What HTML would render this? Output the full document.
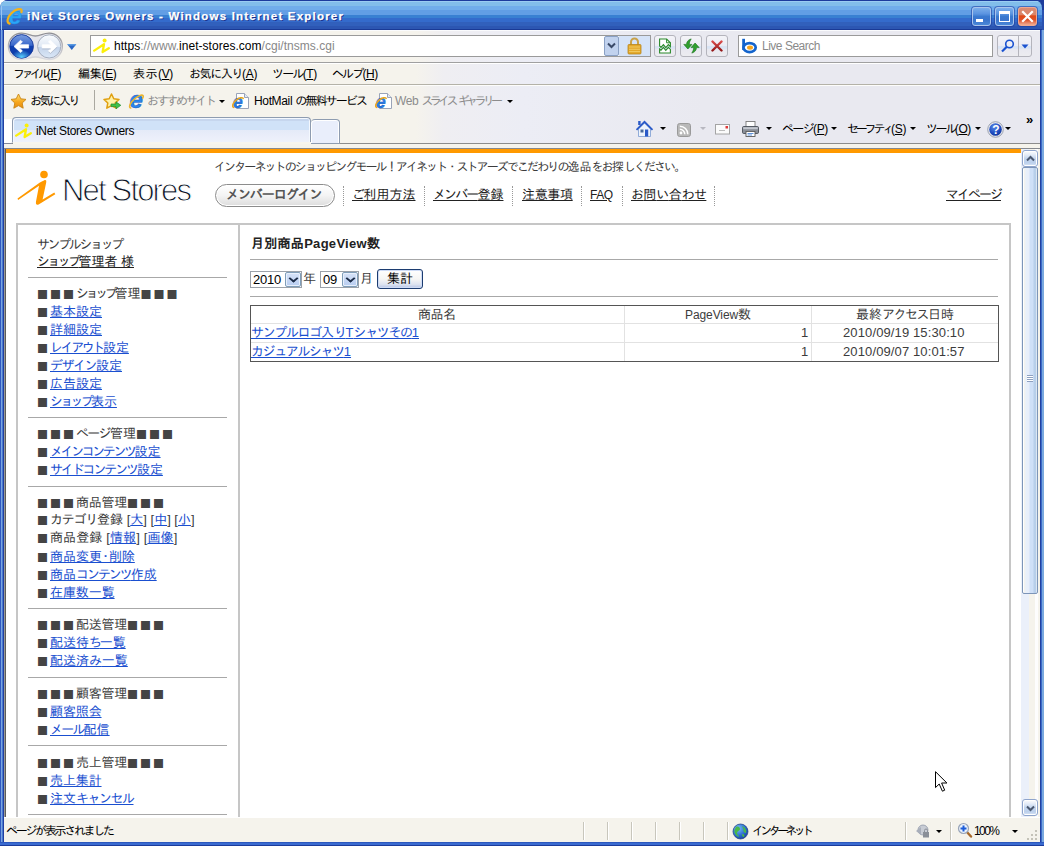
<!DOCTYPE html>
<html lang="ja"><head><meta charset="utf-8"><title>iNet Stores Owners</title>
<style>
*{box-sizing:border-box;margin:0;padding:0}
html,body{width:1044px;height:846px;overflow:hidden;background:#fff}
body{position:relative;font-family:"Liberation Sans","IPAGothic",sans-serif;font-size:12px;color:#000}
.a{position:absolute}
.ui{font-family:"Liberation Sans","IPAGothic",sans-serif;font-size:12px;line-height:14px;white-space:nowrap;color:#000;letter-spacing:-.35px}
.pg{font-family:"Liberation Sans","IPAGothic",sans-serif;font-size:13px;line-height:18px;white-space:nowrap;color:#3c3c3c}
u{text-decoration:underline}
/* window frame */
#frame{left:0;top:0;width:1044px;height:846px;background:#2a52b0;border-radius:8px 0 0 0}
#title{left:0;top:0;width:1042px;height:30px;border-radius:8px 8px 0 0;
background:linear-gradient(#1c3c9c 0,#1c3c9c 1px,#9acdf2 1px,#9acdf2 2px,#82beea 2px,#82beea 6px,#70adea 6px,#70adea 10px,#629ee5 10px,#629ee5 15px,#3980d2 15px,#3980d2 18px,#346bcc 18px,#346bcc 22px,#3160bc 22px,#3160bc 26px,#2c56b2 26px,#2c56b2 29px,#1a3a96 29px)}
#chrome{left:4px;top:30px;width:1036px;height:118px;background:linear-gradient(90deg,#f5f3ec 0,#f5f3ec 412px,#efeef2 440px,#ecedf5 520px,#e9e9f0 700px,#e9e9f0 100%)}
#page{left:6px;top:149px;width:1015px;height:668px;background:#fff;overflow:hidden}
#status{left:4px;top:817px;width:1036px;height:25px;background:#f5f3ec;border-top:1px solid #fff}

#title .tt{left:27px;top:9px;font:bold 11.5px/15px "Liberation Sans","IPAGothic",sans-serif;color:#fff;letter-spacing:1.2px;white-space:nowrap;text-shadow:1px 1px 0 #14308c;-webkit-text-stroke:.25px #fff}
.tb{top:7px;width:19px;height:19px;border-radius:3px;border:1px solid #a9c4ec;box-shadow:0 0 0 1px rgba(28,60,156,.55)}
.tbb{background:linear-gradient(#7aaeea 0,#5a93e0 35%,#3a7ad0 50%,#3a74cc 70%,#4a88d8 100%)}
.tbr{background:linear-gradient(#d88a72 0,#dc8468 40%,#e04a18 46%,#de5026 70%,#e88060 85%,#f2ac90 100%);border-color:#f0a890}
#corner-l,#corner-r{top:0;width:8px;height:8px;background:#fff}

.ln{height:1px;left:4px;width:1036px}
.box{background:#fff;border:1px solid #9a9a9a}
.btn{border:1px solid #b4b4bc;border-radius:3px;background:linear-gradient(#f4f4f8 0,#ececf4 48%,#d9e4f4 50%,#d9e4f4 62%,#e8e8f0 64%,#ececf0 100%)}

.g{color:#8c8c8c}
.dd{width:0;height:0;border:3px solid transparent;border-top:3px solid #000;border-bottom:0}

#tab{box-shadow:inset 1px 1px 0 #f4f8fe,inset -1px 0 0 #f4f8fe;left:12px;top:117px;width:299px;height:25px;border:1px solid #8e9cb0;border-bottom:0;border-radius:4px 4px 0 0;
background:linear-gradient(#c6d6ee 0,#c6d6ee 3px,#d0e2f8 3px,#d0e2f8 12px,#e4eaf8 12px,#e9edf9 17px,#eef1fb 24px)}
#ntab{left:311px;top:119px;width:29px;height:25px;border:1px solid #8e9cb0;border-left:0;border-radius:4px 4px 0 0;background:#e9eefb;box-shadow:inset 1px 1px 0 #fff,inset -1px 0 0 #fff}

#page a,.lk{color:#1a4fd0;text-decoration:underline}
.dk{color:#222;text-decoration:underline}
.hr{height:1px;background:#a8a8a8}
.sq{letter-spacing:0;font:12px/18px "IPAGothic",sans-serif;display:inline-block;width:13px;text-align:center;color:#444;vertical-align:top;position:relative;left:-1px}
.vd{top:37px;width:0;height:20px;border-left:1px dotted #999}
.sel{height:17px;border:1px solid #9ca2aa;background:#fff;font:13px/15px "Liberation Sans","IPAGothic",sans-serif;color:#000;padding-left:2px;letter-spacing:-.2px}
.sel i{position:absolute;right:0;top:0;width:16px;height:15px;background:linear-gradient(#d6e2f8,#b8cdf0);border:1px solid #7f9db9;border-radius:2px;box-shadow:inset 0 0 0 1px #e8f0fc}
.sel i:after{content:"";position:absolute;left:4px;top:2px;width:5px;height:5px;border-right:2px solid #1c2c48;border-bottom:2px solid #1c2c48;transform:scale(1,.8) rotate(45deg);transform-origin:50% 50%}
table{border-collapse:collapse}

#sb{left:1021px;top:149px;width:17px;height:668px;background:linear-gradient(90deg,#ebf0fa 0,#ebf0fa 8px,#f5f3ec 8px,#f5f3ec 14px,#fdfdfd 14px)}
.sbb{left:1px;width:16px;height:17px;border:1px solid #8ea4cc;border-radius:3px;background:linear-gradient(#fdfdfe 0,#e4ecf8 25%,#c3d5ee 50%,#bcd0ec 80%,#dce6f6 100%);box-shadow:inset 0 0 0 1px #fff}
#thumb{left:1px;top:18px;width:16px;height:427px;border:1px solid #7d95b8;border-radius:2px;background:linear-gradient(90deg,#fff 0,#fff 1px,#f6f3ea 1px,#e8f0fb 3px,#e8eefa 6px,#cfe0f8 7px,#cfe0f8 10px,#b8cfea 11px,#b8cfea 13px,#fff 14px)}
.sp{top:4px;width:1px;height:18px;background:#c8c6bc;box-shadow:1px 0 0 #fff}
/*FIT*/
#m1 .k{letter-spacing:-3.57px}
#m2 .k{letter-spacing:-0.23px}
#m3 .k{letter-spacing:0.52px}
#m4 .k{letter-spacing:-1.39px}
#m5 .k{letter-spacing:-1.77px}
#m6 .k{letter-spacing:-1.88px}
#f1 .k{letter-spacing:-2.38px}
#f2 .k{letter-spacing:-2.33px}
#f3 .k{letter-spacing:-1.87px}
#f4 .k{letter-spacing:-3.67px}
#url{letter-spacing:0.03px}
#tabt{letter-spacing:-0.33px}
#c1 .k{letter-spacing:-1.66px}
#c2 .k{letter-spacing:-3.19px}
#c3 .k{letter-spacing:-2.43px}
#logo{letter-spacing:-1.83px}
#tag .k{letter-spacing:-1.90px}
#login .k{letter-spacing:-1.07px}
#n1 .k{letter-spacing:-1.50px}
#n2 .k{letter-spacing:-1.88px}
#n3{letter-spacing:-0.33px}
#n4{letter-spacing:-0.51px}
#n5 .k{letter-spacing:-0.67px}
#n6 .k{letter-spacing:-2.00px}
#st1 .k{letter-spacing:-2.30px}
#st2 .k{letter-spacing:-3.67px}
#st3{letter-spacing:-1.57px}
#s0 .k{letter-spacing:-2.39px}
#s1 .k{letter-spacing:-2.66px}
#s2 .k{letter-spacing:-3.38px}
#s3{letter-spacing:0.00px}
#s4{letter-spacing:0.00px}
#s5 .k{letter-spacing:-2.42px}
#s6 .k{letter-spacing:-1.50px}
#s7{letter-spacing:0.00px}
#s8 .k{letter-spacing:-2.77px}
#s9 .k{letter-spacing:-1.70px}
#s10 .k{letter-spacing:-2.43px}
#s11 .k{letter-spacing:-2.14px}
#s12{letter-spacing:-0.28px}
#s13 .k{letter-spacing:-1.24px}
#s14{letter-spacing:0.12px}
#s15{letter-spacing:-0.03px}
#s16 .k{letter-spacing:-2.06px}
#s17{letter-spacing:-0.08px}
#s18{letter-spacing:-0.28px}
#s19 .k{letter-spacing:-2.30px}
#s20 .k{letter-spacing:-0.20px}
#s21{letter-spacing:-0.28px}
#s22{letter-spacing:-0.12px}
#s23 .k{letter-spacing:-1.80px}
#s24{letter-spacing:-0.28px}
#s25{letter-spacing:-0.12px}
#s26 .k{letter-spacing:-1.50px}
#th1{letter-spacing:-0.50px}
#th2{letter-spacing:-0.10px}
#th3 .k{letter-spacing:-1.50px}
#r1c{letter-spacing:0.12px}
#r2c{letter-spacing:0.12px}
#r1a .k{letter-spacing:-1.35px}
#r2a .k{letter-spacing:-1.40px}
#mt{letter-spacing:0.29px}
#ls{letter-spacing:-0.49px}
/*ENDFIT*/
</style></head><body>
<div class="a" id="frame"></div>
<div class="a" style="left:1034px;top:0;width:10px;height:10px;background:#1c3c9c"></div>
<div class="a" id="title">
<svg class="a" style="left:5px;top:6px" width="20" height="20" viewBox="0 0 20 20">
<text x="3.4" y="17.6" style="font:italic bold 24px 'Liberation Sans',sans-serif" fill="#2aa6f6" stroke="#1a86e8" stroke-width=".3">e</text>
<path d="M4.6 17.6 C1.4 16.6 2 11.4 6.4 7.2 C10.4 3.4 15 2 16.4 3.8 C17 4.6 16.8 5.4 16.4 6.2" fill="none" stroke="#f2b21c" stroke-width="2.2" stroke-linecap="round"/>
</svg>
<div class="a" style="left:1px;top:6px;width:1px;height:24px;background:#9cc4ee"></div>
<div class="a tt">iNet Stores Owners - Windows Internet Explorer</div>
<div class="a tb tbb" style="left:972px"><div class="a" style="left:3px;top:11px;width:7px;height:3px;background:#fff"></div></div>
<div class="a tb tbb" style="left:995px"><div class="a" style="left:3px;top:3px;width:11px;height:11px;border:1px solid #fff;border-top-width:3px"></div></div>
<div class="a tb tbr" style="left:1018px"><svg class="a" style="left:2px;top:2px" width="13" height="13" viewBox="0 0 13 13"><path d="M2 2 L11 11 M11 2 L2 11" stroke="#fff" stroke-width="2.2" stroke-linecap="square"/></svg></div>
</div>
<div class="a" id="chrome"></div>
<div class="a ln" style="top:30px;background:#fafbfd"></div>
<div class="a ln" style="top:62px;background:#a0a0a0"></div>
<div class="a ln" style="top:63px;background:#fff"></div>
<svg class="a" style="left:6px;top:32px" width="74" height="30" viewBox="0 0 74 30">
<defs>
<linearGradient id="gb" x1="0" y1="0" x2="0" y2="1"><stop offset="0" stop-color="#7a9ee0"/><stop offset=".45" stop-color="#3a68cc"/><stop offset=".5" stop-color="#0f40b0"/><stop offset="1" stop-color="#0a3aa8"/></linearGradient>
<radialGradient id="gbg" cx=".5" cy=".5" r=".5"><stop offset="0" stop-color="#5cd0ff"/><stop offset="1" stop-color="#5cd0ff" stop-opacity="0"/></radialGradient>
<linearGradient id="gf" x1="0" y1="0" x2="0" y2="1"><stop offset="0" stop-color="#fafcfe"/><stop offset=".5" stop-color="#dfe8f4"/><stop offset=".55" stop-color="#c4d4ea"/><stop offset="1" stop-color="#dbe8f8"/></linearGradient>
<linearGradient id="gp" x1="0" y1="0" x2="0" y2="1"><stop offset="0" stop-color="#8e8e94"/><stop offset="1" stop-color="#dcdce0"/></linearGradient>
<clipPath id="cb"><circle cx="15.6" cy="14.4" r="11.6"/></clipPath>
</defs>
<path d="M15.6 1.2 C22 1.2 24 4 29.4 4 C34.8 4 36.8 1.2 43.2 1.2 A13.2 13.2 0 0 1 43.2 27.6 C36.8 27.6 34.8 25 29.4 25 C24 25 22 27.6 15.6 27.6 A13.2 13.2 0 0 1 15.6 1.2Z" fill="#e6e6ec" stroke="url(#gp)" stroke-width="1.3"/>
<circle cx="15.6" cy="14.4" r="11.8" fill="url(#gb)" stroke="#16389a" stroke-width=".9"/>
<ellipse cx="15.6" cy="25" rx="10" ry="7" fill="url(#gbg)" clip-path="url(#cb)"/>
<path d="M8 14.4 L14.6 8.2 L16.4 10 L13.4 12.7 L22.6 12.7 L22.6 16.1 L13.4 16.1 L16.4 18.8 L14.6 20.6Z" fill="#fff" stroke="#fff" stroke-width=".7" stroke-linejoin="round"/>
<circle cx="43.2" cy="14.4" r="11.6" fill="url(#gf)" stroke="#a4aebe" stroke-width="1"/>
<path d="M50.8 14.4 L44.2 8.2 L42.4 10 L45.4 12.7 L36.2 12.7 L36.2 16.1 L45.4 16.1 L42.4 18.8 L44.2 20.6Z" fill="#fff" stroke="#fff" stroke-width=".7" stroke-linejoin="round"/>
<path d="M51.2 15.2 L44.4 21.6 L42.6 19.8 M36.2 17 H44.6" fill="none" stroke="#b4bccb" stroke-width=".8"/>
<path d="M61.2 12.2 L70.3 12.2 L65.75 18Z" fill="#2a66c4"/><path d="M61.2 12.2 L70.3 12.2 L69.2 13.6 L62.3 13.6Z" fill="#5aa0e8"/>
</svg>
<div class="a box" style="left:90px;top:35px;width:561px;height:22px"></div>
<svg class="a" style="left:93px;top:37px" width="18" height="18" viewBox="0 0 18 18"><circle cx="11.6" cy="3.4" r="2" fill="#fbef0a"/><path d="M1.2 13.6 L11 7.2 L9.6 15 L15.8 11.2" fill="none" stroke="#fbef0a" stroke-width="2.3" stroke-linejoin="round" stroke-linecap="round"/></svg>
<div class="a ui t" id="url" style="left:114px;top:39px"><span>https</span><span style="color:#888">://www.</span><span>inet-stores.com</span><span style="color:#888">/cgi/tnsms.cgi</span></div>
<div class="a" style="left:604px;top:36px;width:15px;height:20px;background:#c1d2ee;border:1px solid #8aa0c4;border-radius:2px"></div>
<svg class="a" style="left:607px;top:42px" width="9" height="8" viewBox="0 0 9 8"><path d="M1 1.5 L4.5 5 L8 1.5" fill="none" stroke="#3a4a68" stroke-width="2"/></svg>
<div class="a" style="left:619px;top:36px;width:31px;height:20px;background:#d5e3f8"></div>
<svg class="a" style="left:627px;top:37px" width="15" height="18" viewBox="0 0 15 18"><path d="M4 8 V5 A3.5 3.5 0 0 1 11 5 V8" fill="none" stroke="#c9a24a" stroke-width="2"/><rect x="1" y="7.5" width="13" height="9.5" rx="1" fill="#e3a82a" stroke="#b8851c" stroke-width=".8"/><path d="M2 10 H13 M2 12.3 H13 M2 14.6 H13" stroke="#f3cf6a" stroke-width=".9"/></svg>
<div class="a btn" style="left:654px;top:35px;width:22px;height:22px"></div>
<svg class="a" style="left:658px;top:38px" width="14" height="16" viewBox="0 0 14 16"><g fill="#fff" stroke="#2a8a2a" stroke-width="1.1" stroke-linejoin="miter"><path d="M1.6 1 H8.6 L12.4 4.8 V8.6 L10.4 6.6 L7.8 9.6 L5.4 6.6 L3 9.4 L1.6 8Z"/><path d="M1.6 11 L3 12.2 L5.4 9.4 L7.8 12.4 L10.4 9.4 L12.4 11.4 V15 H1.6Z"/></g><path d="M8.6 1 V4.8 H12.4" fill="none" stroke="#2a8a2a" stroke-width="1"/></svg>
<div class="a btn" style="left:680px;top:35px;width:22px;height:22px"></div>
<svg class="a" style="left:682px;top:38px" width="19" height="16" viewBox="0 0 19 16"><g fill="#2fa02f" stroke="#1a701a" stroke-width=".6" stroke-linejoin="round"><path d="M9.2 .9 C6.4 1.6 4.6 3.6 4.5 6.4 L1.8 6.4 L5.9 11 L10 6.4 L7.3 6.4 C7.3 4.4 8 3 9.2 .9Z"/><path d="M9.8 15.1 C12.6 14.4 14.4 12.4 14.5 9.6 L17.2 9.6 L13.1 5 L9 9.6 L11.7 9.6 C11.7 11.6 11 13 9.8 15.1Z"/></g></svg>
<div class="a btn" style="left:706px;top:35px;width:22px;height:22px"></div>
<svg class="a" style="left:711px;top:40px" width="12" height="12" viewBox="0 0 12 12"><defs><linearGradient id="gx" x1="0" y1="0" x2="0" y2="1"><stop offset="0" stop-color="#d84a4a"/><stop offset="1" stop-color="#941818"/></linearGradient></defs><path d="M1.5 1.5 L10.5 10.5 M10.5 1.5 L1.5 10.5" stroke="url(#gx)" stroke-width="2.4" stroke-linecap="round"/></svg>
<div class="a box" style="left:738px;top:35px;width:255px;height:22px"></div>
<svg class="a" style="left:741px;top:37px" width="18" height="18" viewBox="0 0 18 18"><path d="M2.6 1.8 V13" stroke="#1464cc" stroke-width="2.8"/><ellipse cx="8.6" cy="10.6" rx="6.1" ry="4.5" fill="#fff" stroke="#1464cc" stroke-width="2.7"/><ellipse cx="9" cy="10.6" rx="3" ry="2.2" fill="#f7a51c"/></svg>
<div class="a ui t" id="ls" style="left:762px;top:39px;color:#8a8a8a">Live Search</div>
<div class="a btn" style="left:997px;top:35px;width:35px;height:22px"></div>
<div class="a" style="left:1018px;top:36px;width:1px;height:20px;background:#b4b4bc"></div>
<svg class="a" style="left:1000px;top:38px" width="16" height="16" viewBox="0 0 16 16"><circle cx="9.5" cy="6" r="3.8" fill="none" stroke="#1a52d0" stroke-width="1.6"/><path d="M6.8 8.8 L2 13.5" stroke="#1a52d0" stroke-width="2.2"/></svg>
<svg class="a" style="left:1021px;top:44px" width="8" height="5" viewBox="0 0 8 5"><path d="M.5 .5 H7.5 L4 4.5Z" fill="#1a52d0"/></svg>

<div class="a ln" style="top:84px;background:#b4b2a8"></div>
<div class="a ln" style="top:85px;background:#fdfdfb"></div>
<div class="a ui t" id="m1" style="left:13px;top:67px"><span class="k">ファイル</span>(<u>F</u>)</div>
<div class="a ui t" id="m2" style="left:78px;top:67px"><span class="k">編集</span>(<u>E</u>)</div>
<div class="a ui t" id="m3" style="left:133px;top:67px"><span class="k">表示</span>(<u>V</u>)</div>
<div class="a ui t" id="m4" style="left:189px;top:67px"><span class="k">お気に入り</span>(<u>A</u>)</div>
<div class="a ui t" id="m5" style="left:272px;top:67px"><span class="k">ツール</span>(<u>T</u>)</div>
<div class="a ui t" id="m6" style="left:332px;top:67px"><span class="k">ヘルプ</span>(<u>H</u>)</div>
<svg class="a" style="left:10px;top:93px" width="17" height="16" viewBox="0 0 17 16"><defs><linearGradient id="gs" x1="0" y1="0" x2="0" y2="1"><stop offset="0" stop-color="#ffe27a"/><stop offset=".55" stop-color="#f7a81c"/><stop offset="1" stop-color="#e88a10"/></linearGradient></defs><path id="star" d="M8.5 1 L10.8 5.8 L16 6.4 L12.2 10 L13.2 15.2 L8.5 12.6 L3.8 15.2 L4.8 10 L1 6.4 L6.2 5.8Z" fill="url(#gs)" stroke="#c98412" stroke-width=".9" stroke-linejoin="round"/></svg>
<div class="a ui t" id="f1" style="left:30px;top:94px"><span class="k">お気に入り</span></div>
<div class="a" style="left:94px;top:90px;width:1px;height:20px;background:#aaa8a0"></div>
<svg class="a" style="left:103px;top:93px" width="19" height="17" viewBox="0 0 19 17"><path d="M8.5 1 L10.8 5.8 L16 6.4 L12.2 10 L13.2 15.2 L8.5 12.6 L3.8 15.2 L4.8 10 L1 6.4 L6.2 5.8Z" fill="#fff2a8" stroke="#e0a010" stroke-width="1.5" stroke-linejoin="round"/><path d="M8 11 H13 V8.8 L17.8 12.3 L13 15.8 V13.6 H8Z" fill="#3fc24a" stroke="#1f8a2c" stroke-width=".7"/></svg>
<svg class="a" style="left:128px;top:92px" width="18" height="18" viewBox="0 0 18 18"><text x="1.5" y="15.6" style="font:italic bold 24px 'Liberation Sans',sans-serif" fill="#2a86ea" stroke="#1858c0" stroke-width=".5">e</text><path d="M2.8 16 C1 16 1.2 13 4 9.5 C7 5.6 12.6 2.4 14.6 3.3 C15.5 3.8 15.3 5 14.7 6.2" fill="none" stroke="#eab430" stroke-width="1.6" stroke-linecap="round"/></svg>
<div class="a ui t g" id="f2" style="left:147px;top:94px"><span class="k">おすすめサイト</span></div>
<div class="a dd" style="left:219px;top:100px"></div>
<svg class="a" style="left:232px;top:92px" width="18" height="18" viewBox="0 0 18 18"><path d="M4.5 1.5 H12.5 L16.5 5.5 V16.5 H4.5Z" fill="#fff" stroke="#9aa4b8" stroke-width="1"/><path d="M12.5 1.5 V5.5 H16.5" fill="#e4e9f2" stroke="#9aa4b8" stroke-width="1"/><text x=".8" y="15.6" style="font:italic bold 18px 'Liberation Sans',sans-serif" fill="#2a7ee6" stroke="#1858c0" stroke-width=".35">e</text><path d="M1.6 15.4 C-.4 14.4 1 10.4 4.4 7.8 C7.2 5.6 10.4 5 11.2 6.4" fill="none" stroke="#eba81c" stroke-width="1.5" stroke-linecap="round"/></svg>
<div class="a ui t" id="f3" style="left:254px;top:94px">HotMail <span class="k">の無料サービス</span></div>
<svg class="a" style="left:375px;top:92px" width="18" height="18" viewBox="0 0 18 18"><path d="M4.5 1.5 H12.5 L16.5 5.5 V16.5 H4.5Z" fill="#fff" stroke="#9aa4b8" stroke-width="1"/><path d="M12.5 1.5 V5.5 H16.5" fill="#e4e9f2" stroke="#9aa4b8" stroke-width="1"/><text x=".8" y="15.6" style="font:italic bold 18px 'Liberation Sans',sans-serif" fill="#2a7ee6" stroke="#1858c0" stroke-width=".35">e</text><path d="M1.6 15.4 C-.4 14.4 1 10.4 4.4 7.8 C7.2 5.6 10.4 5 11.2 6.4" fill="none" stroke="#eba81c" stroke-width="1.5" stroke-linecap="round"/></svg>
<div class="a ui t g" id="f4" style="left:395px;top:94px">Web <span class="k">スライス</span> <span class="k">ギャラリー</span></div>
<div class="a dd" style="left:507px;top:100px"></div>

<div class="a" style="left:4px;top:143px;width:1036px;height:1px;background:#8c8c8c"></div>
<div class="a" style="left:4px;top:144px;width:1036px;height:4px;background:#f5f3ec"></div>
<div class="a" style="left:4px;top:119px;width:9px;height:25px;border-bottom:1px solid #80889a;border-radius:0 0 3px 0;background:#fff"></div>
<div class="a" id="ntab"></div>
<div class="a" id="tab"></div>
<div class="a" style="left:13px;top:142px;width:298px;height:2px;background:#f7f5ee"></div>
<svg class="a" style="left:15px;top:122px" width="18" height="18" viewBox="0 0 18 18"><circle cx="11.6" cy="3.4" r="2" fill="#fbef0a"/><path d="M1.2 13.6 L11 7.2 L9.6 15 L15.8 11.2" fill="none" stroke="#fbef0a" stroke-width="2.3" stroke-linejoin="round" stroke-linecap="round"/></svg>
<div class="a ui t" id="tabt" style="left:36px;top:124px">iNet Stores Owners</div>
<svg class="a" style="left:635px;top:120px" width="19" height="18" viewBox="0 0 19 18"><rect x="3.2" y="1" width="2.4" height="4" fill="#2a5ac8"/><path d="M3.5 9 L9.5 3 L15.5 9 V16.5 H3.5Z" fill="#eef4fc" stroke="#7a9ad0" stroke-width=".8"/><path d="M1.5 9.8 L9.5 1.8 L17.5 9.8" fill="none" stroke="#2a5ac8" stroke-width="1.8"/><rect x="10" y="9.5" width="3.2" height="7" fill="#2a5ac8"/><rect x="5.5" y="9.5" width="3" height="3" fill="#4a6a9a"/></svg>
<div class="a dd" style="left:660px;top:127px"></div>
<svg class="a" style="left:677px;top:123px" width="14" height="14" viewBox="0 0 14 14"><rect x=".5" y=".5" width="13" height="13" rx="2.2" fill="#b8b8b8" stroke="#9a9a9a"/><circle cx="4" cy="10" r="1.4" fill="#fff"/><path d="M2.8 6.2 A5 5 0 0 1 7.8 11.2 M2.8 3.2 A8 8 0 0 1 10.8 11.2" fill="none" stroke="#fff" stroke-width="1.5"/></svg>
<div class="a dd" style="left:700px;top:127px;border-top-color:#b8b8c0"></div>
<svg class="a" style="left:715px;top:124px" width="15" height="11" viewBox="0 0 15 11"><rect x=".5" y=".5" width="14" height="9.5" fill="#fbfbfb" stroke="#a4a4a4"/><path d="M4 6.5 H10" stroke="#bdbdbd"/><rect x="10.5" y="2" width="2.5" height="2.5" fill="#e03a3a"/></svg>
<svg class="a" style="left:741px;top:120px" width="19" height="18" viewBox="0 0 19 18"><rect x="5" y="1.5" width="9" height="6" fill="#fff" stroke="#7a7a7a" stroke-width=".9"/><rect x="1.5" y="6.5" width="16" height="7" rx="1.2" fill="#8a8f98" stroke="#4a4f58" stroke-width=".9"/><rect x="2.2" y="7.2" width="14.6" height="2" fill="#c4c8d0"/><rect x="5" y="11.5" width="9" height="5" fill="#fff" stroke="#5a5a5a" stroke-width=".9"/><path d="M6.5 13.5 H12.5 M6.5 15 H11" stroke="#3a78d0" stroke-width=".8"/></svg>
<div class="a dd" style="left:766px;top:127px"></div>
<div class="a ui t" id="c1" style="left:782px;top:122px"><span class="k">ページ</span>(<u>P</u>)</div>
<div class="a dd" style="left:831px;top:127px"></div>
<div class="a ui t" id="c2" style="left:847px;top:122px"><span class="k">セーフティ</span>(<u>S</u>)</div>
<div class="a dd" style="left:910px;top:127px"></div>
<div class="a ui t" id="c3" style="left:926px;top:122px"><span class="k">ツール</span>(<u>O</u>)</div>
<div class="a dd" style="left:975px;top:127px"></div>
<svg class="a" style="left:987px;top:121px" width="17" height="17" viewBox="0 0 17 17"><defs><radialGradient id="gh" cx=".4" cy=".3" r=".8"><stop offset="0" stop-color="#5a8ae8"/><stop offset=".6" stop-color="#1f4cc0"/><stop offset="1" stop-color="#0f2f90"/></radialGradient></defs><circle cx="8.5" cy="8.5" r="7.8" fill="#e8e8ee" stroke="#8890a0" stroke-width=".8"/><circle cx="8.5" cy="8.5" r="6.3" fill="url(#gh)"/><text x="5.3" y="12.8" style="font:bold 12px 'Liberation Sans',sans-serif" fill="#fff">?</text></svg>
<div class="a dd" style="left:1005px;top:127px"></div>
<div class="a ui" style="left:1026px;top:113px;font-weight:bold;font-size:13px">»</div>
<div class="a" id="page">
<div class="a" style="left:0;top:0;width:1015px;height:4px;background:#ff9900"></div>
<svg class="a" style="left:8px;top:19px" width="46" height="40" viewBox="0 0 46 40"><circle cx="30" cy="6.5" r="3.8" fill="#ff9900"/><path d="M4.1 31.9 L25 17.7 L22 33.5 C21.6 36.2 22.6 37.4 24.6 36.4 L41.3 26.3 L40.3 24.6 L28.6 31.5 L32.2 14.4 C32.6 12.4 31.8 11.6 30 12.4 C28.6 13 27 13.8 25.5 14.7 L3.5 30.5Z" fill="#ff9900"/></svg>
<div class="a t" id="logo" style="left:56px;top:24px;font:31px/36px 'Liberation Sans',sans-serif;color:#0c1424;white-space:nowrap;-webkit-text-stroke:1px #fff">Net Stores</div>
<div class="a pg t" id="tag" style="left:208px;top:9px;font-size:12px"><span class="k">インターネットのショッピングモール！アイネット・ストアーズでこだわりの</span>逸品<span class="k">をお</span>探<span class="k">しください</span>。</div>
<div class="a" style="left:209px;top:35px;width:120px;height:23px;border:1px solid #8c8c8c;border-radius:12px;background:linear-gradient(#fff 0,#f4f4f4 50%,#dcdcdc 100%);box-shadow:inset 0 0 0 1px #fff"></div>
<div class="a pg t" id="login" style="left:220px;top:37px;font-weight:bold;color:#555"><span class="k">メンバーログイン</span></div>
<div class="a vd" style="left:337px"></div>
<div class="a vd" style="left:418px"></div>
<div class="a vd" style="left:506px"></div>
<div class="a vd" style="left:575px"></div>
<div class="a vd" style="left:616px"></div>
<div class="a vd" style="left:708px"></div>
<div class="a pg t dk" id="n1" style="left:346px;top:37px"><span class="k">ご</span>利用方法</div>
<div class="a pg t dk" id="n2" style="left:427px;top:37px"><span class="k">メンバー</span>登録</div>
<div class="a pg t dk" id="n3" style="left:516px;top:37px">注意事項</div>
<div class="a pg t dk" id="n4" style="left:584px;top:37px;font-size:12px">FAQ</div>
<div class="a pg t dk" id="n5" style="left:625px;top:37px"><span class="k">お</span>問<span class="k">い</span>合<span class="k">わせ</span></div>
<div class="a pg t dk" id="n6" style="left:940px;top:37px"><span class="k">マイページ</span></div>
<div class="a" style="left:10px;top:74px;width:995px;height:700px;border:2px solid #c6c6c6"></div>
<div class="a" style="left:232px;top:74px;width:2px;height:700px;background:#c6c6c6"></div>
<div class="a pg t" id="s0" style="left:31px;top:87px"><span class="k">サンプルショップ</span></div>
<div class="a pg t" id="s1" style="left:31px;top:104px"><span class="dk"><span class="k">ショップ</span>管理者 様</span></div>
<div class="a hr" style="left:22px;top:128px;width:199px"></div>
<div class="a pg t" id="s2" style="left:31px;top:136px"><span class="sq">■</span><span class="sq">■</span><span class="sq">■</span><span class="k">ショップ</span>管理<span class="sq">■</span><span class="sq">■</span><span class="sq">■</span></div>
<div class="a pg t" id="s3" style="left:31px;top:154px"><span class="sq">■</span><a>基本設定</a></div>
<div class="a pg t" id="s4" style="left:31px;top:172px"><span class="sq">■</span><a>詳細設定</a></div>
<div class="a pg t" id="s5" style="left:31px;top:190px"><span class="sq">■</span><a><span class="k">レイアウト</span>設定</a></div>
<div class="a pg t" id="s6" style="left:31px;top:208px"><span class="sq">■</span><a><span class="k">デザイン</span>設定</a></div>
<div class="a pg t" id="s7" style="left:31px;top:226px"><span class="sq">■</span><a>広告設定</a></div>
<div class="a pg t" id="s8" style="left:31px;top:244px"><span class="sq">■</span><a><span class="k">ショップ</span>表示</a></div>
<div class="a hr" style="left:22px;top:268px;width:199px"></div>
<div class="a pg t" id="s9" style="left:31px;top:276px"><span class="sq">■</span><span class="sq">■</span><span class="sq">■</span><span class="k">ページ</span>管理<span class="sq">■</span><span class="sq">■</span><span class="sq">■</span></div>
<div class="a pg t" id="s10" style="left:31px;top:294px"><span class="sq">■</span><a><span class="k">メインコンテンツ</span>設定</a></div>
<div class="a pg t" id="s11" style="left:31px;top:312px"><span class="sq">■</span><a><span class="k">サイドコンテンツ</span>設定</a></div>
<div class="a hr" style="left:22px;top:337px;width:199px"></div>
<div class="a pg t" id="s12" style="left:31px;top:345px"><span class="sq">■</span><span class="sq">■</span><span class="sq">■</span>商品管理<span class="sq">■</span><span class="sq">■</span><span class="sq">■</span></div>
<div class="a pg t" id="s13" style="left:31px;top:362px"><span class="sq">■</span><span class="k">カテゴリ</span>登録 [<a>大</a>] [<a>中</a>] [<a>小</a>]</div>
<div class="a pg t" id="s14" style="left:31px;top:380px"><span class="sq">■</span>商品登録 [<a>情報</a>] [<a>画像</a>]</div>
<div class="a pg t" id="s15" style="left:31px;top:399px"><span class="sq">■</span><a>商品変更<span style="margin:0 -3px">・</span>削除</a></div>
<div class="a pg t" id="s16" style="left:31px;top:417px"><span class="sq">■</span><a>商品<span class="k">コンテンツ</span>作成</a></div>
<div class="a pg t" id="s17" style="left:31px;top:435px"><span class="sq">■</span><a>在庫数一覧</a></div>
<div class="a hr" style="left:22px;top:459px;width:199px"></div>
<div class="a pg t" id="s18" style="left:31px;top:467px"><span class="sq">■</span><span class="sq">■</span><span class="sq">■</span>配送管理<span class="sq">■</span><span class="sq">■</span><span class="sq">■</span></div>
<div class="a pg t" id="s19" style="left:31px;top:485px"><span class="sq">■</span><a>配送待<span class="k">ち</span>一覧</a></div>
<div class="a pg t" id="s20" style="left:31px;top:503px"><span class="sq">■</span><a>配送済<span class="k">み</span>一覧</a></div>
<div class="a hr" style="left:22px;top:528px;width:199px"></div>
<div class="a pg t" id="s21" style="left:31px;top:536px"><span class="sq">■</span><span class="sq">■</span><span class="sq">■</span>顧客管理<span class="sq">■</span><span class="sq">■</span><span class="sq">■</span></div>
<div class="a pg t" id="s22" style="left:31px;top:554px"><span class="sq">■</span><a>顧客照会</a></div>
<div class="a pg t" id="s23" style="left:31px;top:572px"><span class="sq">■</span><a><span class="k">メール</span>配信</a></div>
<div class="a hr" style="left:22px;top:596px;width:199px"></div>
<div class="a pg t" id="s24" style="left:31px;top:605px"><span class="sq">■</span><span class="sq">■</span><span class="sq">■</span>売上管理<span class="sq">■</span><span class="sq">■</span><span class="sq">■</span></div>
<div class="a pg t" id="s25" style="left:31px;top:623px"><span class="sq">■</span><a>売上集計</a></div>
<div class="a pg t" id="s26" style="left:31px;top:641px"><span class="sq">■</span><a>注文<span class="k">キャンセル</span></a></div>
<div class="a hr" style="left:22px;top:665px;width:199px"></div>
<div class="a pg t" id="mt" style="left:245px;top:86px;font-weight:bold;color:#222">月別商品PageView数</div>
<div class="a hr" style="left:244px;top:110px;width:748px"></div>
<div class="a sel" style="left:244px;top:122px;width:52px">2010<i></i></div>
<div class="a pg" style="left:297px;top:121px">年</div>
<div class="a sel" style="left:314px;top:122px;width:39px">09<i></i></div>
<div class="a pg" style="left:354px;top:121px">月</div>
<div class="a" style="left:371px;top:119px;width:46px;height:20px;margin-top:1px;border:1px solid #1c3c70;border-radius:3px;background:linear-gradient(#fff 0,#f6f6f4 50%,#dde3f0 80%,#b4c4e6 100%);box-shadow:inset 0 0 0 1px #cfdcf6"></div>
<div class="a pg" style="left:381px;top:121px;color:#000">集計</div>
<div class="a hr" style="left:244px;top:147px;width:748px"></div>
<div class="a" style="left:244px;top:156px;width:749px;height:57px;border:1px solid #555"></div>
<div class="a" style="left:245px;top:174px;width:747px;height:1px;background:#e2e2e2"></div>
<div class="a" style="left:245px;top:193px;width:747px;height:1px;background:#e2e2e2"></div>
<div class="a" style="left:618px;top:157px;width:1px;height:55px;background:#e2e2e2"></div>
<div class="a" style="left:805px;top:157px;width:1px;height:55px;background:#e2e2e2"></div>
<div class="a pg t" id="th1" style="left:412px;top:157px;">商品名</div>
<div class="a pg t" id="th2" style="left:679px;top:157px;"><span style="font-size:12px">PageView</span>数</div>
<div class="a pg t" id="th3" style="left:850px;top:157px;">最終<span class="k">アクセス</span>日時</div>
<div class="a pg t" id="r1a" style="left:245px;top:175px;"><a><span class="k">サンプルロゴ</span>入<span class="k">り</span>T<span class="k">シャツその</span>1</a></div>
<div class="a pg t" id="r1b" style="left:795px;top:175px;">1</div>
<div class="a pg t" id="r1c" style="left:837px;top:175px;">2010/09/19 15:30:10</div>
<div class="a pg t" id="r2a" style="left:245px;top:194px;"><a><span class="k">カジュアルシャツ</span>1</a></div>
<div class="a pg t" id="r2b" style="left:795px;top:194px;">1</div>
<div class="a pg t" id="r2c" style="left:837px;top:194px;">2010/09/07 10:01:57</div>
</div>

<div class="a" style="left:4px;top:148px;width:1036px;height:1px;background:#85888e"></div>
<div class="a" style="left:4px;top:149px;width:1px;height:668px;background:#9c9a94"></div>
<div class="a" style="left:5px;top:149px;width:1px;height:668px;background:#5c5c5c"></div>
<div class="a" style="left:1038px;top:149px;width:2px;height:668px;background:#f5f3ec"></div>
<div class="a" id="sb">
<div class="a sbb" style="top:1px"><svg class="a" style="left:3px;top:4px" width="9" height="7" viewBox="0 0 9 7"><path d="M1 5.5 L4.5 2 L8 5.5" fill="none" stroke="#4a5870" stroke-width="2"/></svg></div>
<div class="a" id="thumb"><div class="a" style="left:4px;top:207px;width:6px;height:7px;background:repeating-linear-gradient(#8ea0c0 0,#8ea0c0 1px,#fff 1px,#fff 2px)"></div></div>
<div class="a sbb" style="top:650px"><svg class="a" style="left:3px;top:5px" width="9" height="7" viewBox="0 0 9 7"><path d="M1 1.5 L4.5 5 L8 1.5" fill="none" stroke="#4a5870" stroke-width="2"/></svg></div>
</div>
<div class="a" id="status">
<div class="a ui t" id="st1" style="left:2px;top:6px"><span class="k">ページが表示されました</span></div>
<div class="a sp" style="left:579px"></div><div class="a sp" style="left:603px"></div><div class="a sp" style="left:627px"></div><div class="a sp" style="left:651px"></div><div class="a sp" style="left:675px"></div><div class="a sp" style="left:699px"></div><div class="a sp" style="left:723px"></div><div class="a sp" style="left:901px"></div><div class="a sp" style="left:946px"></div>
<svg class="a" style="left:728px;top:5px" width="17" height="17" viewBox="0 0 17 17"><defs><radialGradient id="gg" cx=".35" cy=".3" r=".8"><stop offset="0" stop-color="#7ac0f8"/><stop offset=".6" stop-color="#2a6cd0"/><stop offset="1" stop-color="#143c98"/></radialGradient></defs><circle cx="8.5" cy="8.5" r="7.5" fill="url(#gg)" stroke="#1c3c80" stroke-width=".7"/><path d="M4 4 C6 3 8 4 8 6 C8 8 5 8 5 10 C5 12 7 12 7 14 C4 13 2 10 2.5 7Z M10 3 C13 4 15 7 14 10 C12 10 11 8 11.5 6.5Z M10 11 C12 11 13 12 12 14 C11 14.5 10 13 10 11Z" fill="#4ab84a"/></svg>
<div class="a ui t" id="st2" style="left:748px;top:6px"><span class="k">インターネット</span></div>
<svg class="a" style="left:911px;top:6px" width="16" height="15" viewBox="0 0 16 15"><circle cx="8" cy="6" r="5" fill="#c8ccd4" stroke="#9098a8" stroke-width=".8"/><path d="M1 7 L6 3 L6 11Z" fill="#a8aeba"/><rect x="8" y="8" width="6" height="5.5" fill="#8a8f98"/><path d="M9.5 8 V6.5 A1.5 1.5 0 0 1 12.5 6.5 V8" fill="none" stroke="#8a8f98" stroke-width="1"/></svg>
<div class="a dd" style="left:932px;top:12px"></div>
<svg class="a" style="left:953px;top:4px" width="16" height="16" viewBox="0 0 16 16"><path d="M9 9 L14 14.5" stroke="#a8682a" stroke-width="2.4" stroke-linecap="round"/><circle cx="6.5" cy="6.5" r="5" fill="#eaf2fc" stroke="#98a4b8" stroke-width="1.2"/><path d="M6.5 3.5 V9.5 M3.5 6.5 H9.5" stroke="#1c5cd8" stroke-width="2"/></svg>
<div class="a ui t" id="st3" style="left:970px;top:6px">100%</div>
<div class="a dd" style="left:1008px;top:12px"></div>
<svg class="a" style="left:1022px;top:11px" width="13" height="13" viewBox="0 0 13 13"><g fill="#c4c2b8"><rect x="9" y="1" width="2" height="2"/><rect x="5" y="5" width="2" height="2"/><rect x="9" y="5" width="2" height="2"/><rect x="1" y="9" width="2" height="2"/><rect x="5" y="9" width="2" height="2"/><rect x="9" y="9" width="2" height="2"/></g></svg>
</div>
<div class="a" style="left:0;top:30px;width:4px;height:816px;background:linear-gradient(90deg,#3058c0 0,#3058c0 1px,#7aa6e0 1px,#7aa6e0 2px,#4a78d0 2px,#4a78d0 3px,#2040a0 3px)"></div>
<div class="a" style="left:1040px;top:30px;width:4px;height:816px;background:linear-gradient(90deg,#2040a0 0,#2040a0 1px,#3c6bc8 1px,#3c6bc8 2px,#7aa9de 2px)"></div>
<div class="a" style="left:0;top:842px;width:1044px;height:4px;background:linear-gradient(#2c58be 0,#2c58be 1px,#3a6bd0 1px,#3a6bd0 3px,#1c3c9c 3px)"></div>

<svg class="a" style="left:935px;top:771px" width="14" height="22" viewBox="0 0 14 22"><path d="M.5 .7 V16.6 L4.2 13 L7.4 20.2 L9.7 19.2 L6.6 12 H11.9Z" fill="#fff" stroke="#000" stroke-width="1" stroke-linejoin="miter"/></svg>
</body></html>
